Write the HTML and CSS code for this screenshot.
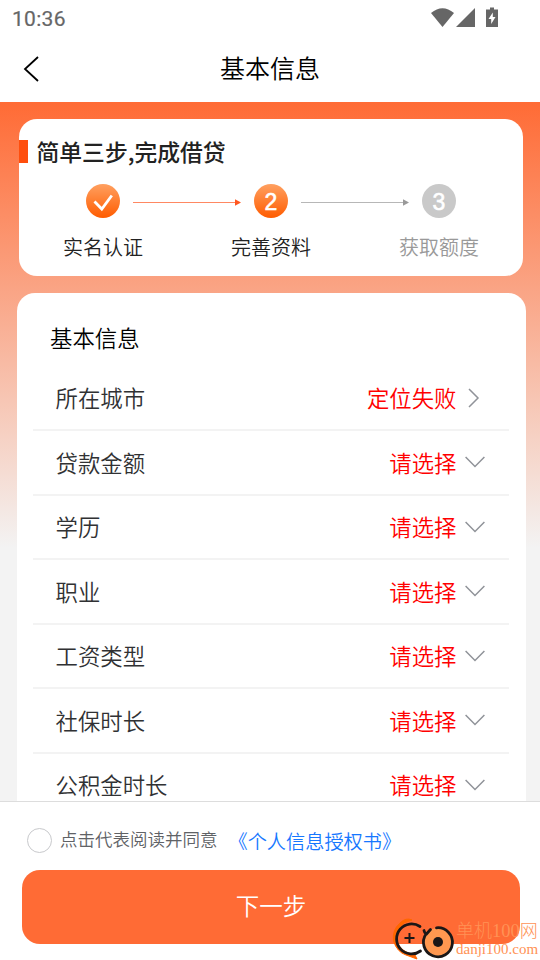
FILE: index.html
```html
<!DOCTYPE html>
<html lang="zh-CN">
<head>
<meta charset="utf-8">
<title>基本信息</title>
<link rel="stylesheet" href="styles.css">
</head>
<body>
<div class="app">
  <div class="status">
    <span class="time">10:36</span>
    <svg class="status-icons" width="70" height="24" viewBox="0 0 70 24" fill="#666">
      <path d="M1 10Q12.500 .5 24 10L12.500 24Z"/>
      <path d="M45 5V24H26Z"/>
      <path fill-rule="evenodd" d="M56 6.500h4V4.500h4v2h4V24H56ZM62.800 9.500L58.500 16h2.700v5l4.300-7h-2.700Z"/>
    </svg>
  </div>
  <header class="nav">
    <svg class="back" width="18" height="28" viewBox="0 0 18 28" fill="none" stroke="#000" stroke-width="1.800"><path d="M16 2L3 14l13 12"/></svg>
    <h1>基本信息</h1>
  </header>
  <main class="content">
    <section class="steps-card">
      <h2>简单三步,完成借贷</h2>
      <div class="steps">
        <div class="step"><span class="dot"><svg width="34" height="34" viewBox="0 0 34 34" fill="none" stroke="#fff" stroke-width="2.800"><path d="M8.500 16.500l7.300 7.500L25.800 10.500"/></svg></span><span>实名认证</span></div>
        <svg class="arrow orange" width="108" height="8" viewBox="0 0 108 8"><path class="shaft" d="M0 4.500H104"/><path class="head" d="M102 1.300L108 4.500L102 7.700Z"/></svg>
        <div class="step"><span class="dot">2</span><span>完善资料</span></div>
        <svg class="arrow grey" width="108" height="8" viewBox="0 0 108 8"><path class="shaft" d="M0 4.500H104"/><path class="head" d="M102 1.300L108 4.500L102 7.700Z"/></svg>
        <div class="step pending"><span class="dot">3</span><span>获取额度</span></div>
      </div>
    </section>
    <section class="form-card">
      <h3>基本信息</h3>
      <div class="row"><span>所在城市</span><span class="value">定位失败</span><svg class="chev" width="20" height="20" viewBox="0 0 20 20"><path d="M4 1l9 9-9 9"/></svg></div>
      <div class="row"><span>贷款金额</span><span class="value">请选择</span><svg class="chev" width="20" height="20" viewBox="0 0 20 20"><path d="M.6 5l9.400 9.500 9.400-9.500"/></svg></div>
      <div class="row"><span>学历</span><span class="value">请选择</span><svg class="chev" width="20" height="20" viewBox="0 0 20 20"><path d="M.6 5l9.400 9.500 9.400-9.500"/></svg></div>
      <div class="row"><span>职业</span><span class="value">请选择</span><svg class="chev" width="20" height="20" viewBox="0 0 20 20"><path d="M.6 5l9.400 9.500 9.400-9.500"/></svg></div>
      <div class="row"><span>工资类型</span><span class="value">请选择</span><svg class="chev" width="20" height="20" viewBox="0 0 20 20"><path d="M.6 5l9.400 9.500 9.400-9.500"/></svg></div>
      <div class="row"><span>社保时长</span><span class="value">请选择</span><svg class="chev" width="20" height="20" viewBox="0 0 20 20"><path d="M.6 5l9.400 9.500 9.400-9.500"/></svg></div>
      <div class="row"><span>公积金时长</span><span class="value">请选择</span><svg class="chev" width="20" height="20" viewBox="0 0 20 20"><path d="M.6 5l9.400 9.500 9.400-9.500"/></svg></div>
    </section>
  </main>
  <footer class="footer">
    <div class="agree"><span class="radio"></span><span class="agree-text">点击代表阅读并同意</span><a class="link">《个人信息授权书》</a></div>
    <div class="submit">下一步</div>
  </footer>
  <div class="watermark">
    <svg width="66" height="46" viewBox="0 0 66 46" fill="none">
      <path d="M22 5Q16 2 10 8Q2 15 3.500 26Q7 37 16 40l11 4-2-4Q10 37 7 26Q6 14 14 8Z" fill="#f60" stroke="#f60"/>
      <path d="M30 11.500A15 15 0 1 0 30.500 36" stroke="#1b1717" stroke-width="2.800" stroke-linecap="round"/>
      <path d="M14.500 23h10M19.500 18v10" stroke="#1b1717" stroke-width="2"/>
      <circle cx="48" cy="27" r="14" fill="#ff9850"/>
      <path d="M46.500 12.800A14.500 14.500 0 1 1 36 19Q34.500 18 34 15.500M36.500 19l4-4.500" stroke="#1b1717" stroke-width="2.800" stroke-linecap="round"/>
      <circle cx="48" cy="27" r="5" fill="#1b1717"/>
    </svg>
    <div class="mark-text"><span class="mark-name">单机<span class="mark-number">100</span>网</span><span class="mark-url">danji100.com</span></div>
  </div>
</div>
</body>
</html>
```
FILE: styles.css
```css
* { box-sizing: border-box; }
body { margin: 0; background: #fff; font-family: "Noto Sans CJK SC", sans-serif; font-weight: 350; }
h1, h2, h3 { margin: 0; font-weight: inherit; }
svg { display: block; flex: none; }
.app { position: relative; width: 540px; height: 960px; display: flex; flex-direction: column; overflow: hidden; }
.status { height: 36px; display: flex; justify-content: space-between; padding: 3px 40px 0 12px; }
.time { font: 400 21px/32px Roboto, sans-serif; color: #666; letter-spacing: .3px; -webkit-text-stroke: .2px #666; }
.nav { height: 66px; display: grid; grid-template-columns: 1fr auto 1fr; padding: 0 22px; }
.back { margin-top: 19px; }
.nav h1 { font-size: 25px; line-height: 62px; color: #000; }
.content { height: 699px; overflow: hidden; padding: 17px 14px 0 17px; background: linear-gradient(#ff6b35 0, #f3f3f3 446px); }
.steps-card { height: 157px; margin: 0 3px 17px 2px; background: #fff; border-radius: 18px; padding-top: 16px; }
.steps-card h2 { display: flex; align-items: center; gap: 8.500px; font-size: 22.800px; line-height: 34px; font-weight: 500; color: #222; }
.steps-card h2::before { content: ""; width: 9px; height: 23px; margin-top: -1px; background: #ff4e0d; }
.steps { display: flex; align-items: flex-start; padding: 15px 0 0 34px; }
.step { width: 100px; display: flex; flex-direction: column; align-items: center; gap: 14px; font-size: 20px; line-height: 30px; color: #222; }
.dot { width: 34px; height: 34px; border-radius: 50%; display: flex; align-items: center; justify-content: center; background: linear-gradient(#ffa060, #ff5c00); color: #fff; font: 400 23px/34px "Liberation Sans", sans-serif; padding-top: 1px; -webkit-text-stroke: .6px #fff; }
.step .dot { margin-top: .4px; }
.pending { color: #999; }
.pending .dot { background: #c9c9c9; }
.arrow { margin: 14px -20px 0; }
.shaft { stroke: currentColor; stroke-width: 1; opacity: .7; }
.head { fill: currentColor; }
.orange { color: #ff5720; }
.grey { color: #999; }
.form-card { background: #fff; border-radius: 18px; padding: 26px 17px 0 16px; }
.form-card h3 { font-size: 22.400px; line-height: 36px; padding-left: 17px; color: #000; }
.row { display: flex; align-items: center; height: 64.500px; padding: 0 24px 0 22.500px; border-bottom: 2px solid #f3f3f3; font-size: 22.400px; line-height: 34px; color: #303133; }
.row > span { margin-top: -1.500px; }
.form-card h3 + .row { margin-top: 11.700px; }
.value { margin-left: auto; margin-right: 8.500px; color: #f00; }
.chev { fill: none; stroke: #909399; stroke-width: 1.500; }
.footer { height: 159px; border-top: 1px solid #ddd; padding: 11px 20px 0 22px; background: #fff; }
.agree { height: 57px; display: flex; align-items: center; padding: 0 0 3px 5px; }
.radio { width: 25px; height: 25px; border: 1px solid #c8c9cc; border-radius: 50%; margin-right: 8px; }
.agree-text { font-size: 17.500px; color: #606266; margin: -3px 11px 0 0; }
.link { font-size: 19.200px; color: #1677ff; padding-top: 1px; }
.submit { height: 74px; border-radius: 18px; background: #ff6b35; color: #fff; text-align: center; font-size: 23.500px; line-height: 71px; }
.watermark { position: absolute; left: 390px; top: 915px; display: flex; color: #ff9255; }
.mark-text { display: flex; flex-direction: column; white-space: nowrap; }
.mark-name { font-size: 18px; font-weight: 300; line-height: 29px; }
.mark-number { font: 18.500px "Liberation Serif", serif; }
.mark-url { font: 15px/11px "Liberation Serif", serif; }
```
